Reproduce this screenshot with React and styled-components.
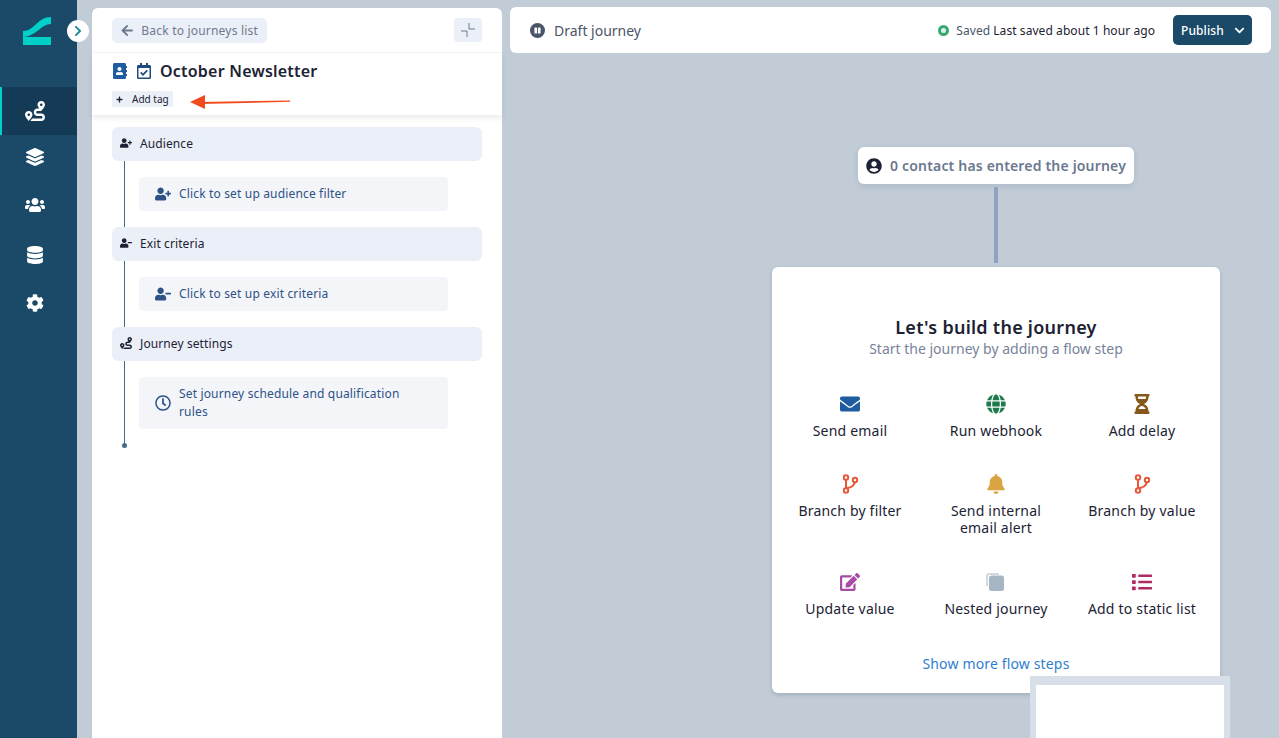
import React from 'react';
import styled, { createGlobalStyle } from 'styled-components';
import {
  FaRoute, FaLayerGroup, FaUsers, FaDatabase, FaCog, FaUserPlus, FaUserMinus, FaRegClock,
  FaEnvelope, FaGlobe, FaHourglassHalf, FaBell, FaEdit, FaList, FaUserCircle, FaPause,
  FaArrowLeft, FaChevronRight, FaChevronDown, FaPlus, FaAddressBook, FaRegCalendarCheck,
} from 'react-icons/fa';

const GlobalStyle = createGlobalStyle`
  html, body {
    margin: 0;
    height: 100%;
    overflow: hidden;
  }
  body {
    font-family: "Noto Sans", "Open Sans", sans-serif;
    background: #c1ccd7;
    color: #1c2233;
  }
  * { box-sizing: border-box; }
`;

const Page = styled.div`
  display: flex;
  height: 738px;
  position: relative;
  overflow: hidden;
`;

const Sidebar = styled.nav`
  width: 77px;
  flex: none;
  background: #1a4a68;
  padding-top: 87px;
  position: relative;
`;

const LogoMark = styled.svg`
  position: absolute;
  left: 23px;
  top: 17px;
`;

const Toggle = styled.button`
  position: absolute;
  left: 67px;
  top: 20px;
  width: 22px;
  height: 22px;
  border: none;
  border-radius: 50%;
  background: #fff;
  color: #1f8a96;
  display: flex;
  align-items: center;
  justify-content: center;
  padding: 0;
  font-size: 12px;
`;

const NavItem = styled.div`
  height: 48px;
  display: flex;
  align-items: center;
  justify-content: center;
  color: #fff;
  font-size: 18px;
  background: ${p => (p.$active ? '#153a55' : 'transparent')};
  box-shadow: ${p => (p.$active ? 'inset 2px 0 0 #00d0c8' : 'none')};
  padding-right: 7px;
  padding-bottom: ${p => p.$nudge || 0}px;
`;

const Panel = styled.aside`
  width: 410px;
  flex: none;
  margin: 8px 0 0 15px;
  background: #fff;
  border-radius: 6px 6px 0 0;
`;

const BackRow = styled.div`
  height: 45px;
  padding: 10px 20px 0;
  display: flex;
  justify-content: space-between;
  align-items: flex-start;
  border-bottom: 1px solid #f5f6f8;
`;

const BackButton = styled.button`
  height: 25px;
  width: 155px;
  border: none;
  border-radius: 5px;
  background: #ebeff7;
  color: #6f7a90;
  font: 12px "Noto Sans", sans-serif;
  letter-spacing: 0.2px;
  display: flex;
  align-items: center;
  gap: 8px;
  padding: 0 9px;
  white-space: nowrap;
`;

const CollapseButton = styled.button`
  width: 28px;
  height: 24px;
  border: none;
  border-radius: 4px;
  background: #ebeff7;
  color: #6f7a90;
  padding: 0;
  display: flex;
  align-items: center;
  justify-content: center;
`;

const TitleBlock = styled.div`
  height: 62px;
  padding: 8px 20px 0;
  box-shadow: 0 3px 5px rgba(40, 60, 90, 0.1);
  position: relative;
`;

const TitleRow = styled.div`
  display: flex;
  align-items: center;
  height: 20px;
  color: #1f5da0;
`;

const TitleIcon = styled.span`
  display: flex;
  font-size: 16px;
  margin-right: ${p => p.$gap}px;
  color: ${p => p.$color};
`;

const Title = styled.h1`
  margin: 0;
  font-size: 16px;
  line-height: 20px;
  font-weight: 600;
  letter-spacing: 0.22px;
  color: #1c2233;
`;

const TagButton = styled.div`
  margin-top: 10px;
  width: 61px;
  height: 16px;
  background: #ebeff7;
  border-radius: 2px;
  font-size: 10px;
  line-height: 16px;
  display: flex;
  align-items: center;
  gap: 9px;
  padding-left: 4px;
  color: #1c2233;
  white-space: nowrap;
`;

const Arrow = styled.svg`
  position: absolute;
  left: 190px;
  top: 93px;
`;

const Steps = styled.div`
  padding: 12px 20px 0;
`;

const StepHeader = styled.div`
  height: 34px;
  background: #ebeff7;
  border-radius: 6px;
  display: flex;
  align-items: center;
  gap: 8px;
  padding: 0 0 2px 8px;
  font-size: 12px;
  letter-spacing: 0.1px;
  color: #1c2233;
`;

const StepIcon = styled.span`
  width: 12px;
  display: flex;
  justify-content: center;
  font-size: 12px;
`;

const StepBody = styled.div`
  margin-left: 12px;
  border-left: 1px solid #3d6c8e;
  padding: 16px 0 16px 14px;
  position: relative;
`;

const EndDot = styled.span`
  position: absolute;
  left: -3px;
  bottom: -3px;
  width: 5px;
  height: 5px;
  border-radius: 50%;
  background: #3d6c8e;
`;

const StepCard = styled.div`
  width: 309px;
  min-height: 34px;
  background: #f4f5f8;
  border-radius: 4px;
  display: flex;
  align-items: center;
  gap: 8px;
  padding: 8px 40px 8px 16px;
  font-size: 12px;
  line-height: 18px;
  letter-spacing: 0.16px;
  color: #2d5288;
`;

const CardIcon = styled.span`
  width: 16px;
  flex: none;
  display: flex;
  justify-content: center;
  font-size: 16px;
`;

const Main = styled.main`
  flex: 1;
  padding: 7px 8px 0;
  position: relative;
`;

const TopBar = styled.header`
  height: 46px;
  background: #fff;
  border-radius: 6px;
  display: flex;
  align-items: center;
  padding: 0 19px 0 20px;
  font-size: 12px;
  letter-spacing: 0.07px;
`;

const Status = styled.div`
  display: flex;
  align-items: center;
  gap: 9px;
  font-size: 14px;
  letter-spacing: 0;
  color: #4b5568;
  margin-right: auto;
`;

const PauseDot = styled.span`
  width: 15px;
  height: 15px;
  border-radius: 50%;
  background: #4b5568;
  color: #fff;
  font-size: 7px;
  display: flex;
  align-items: center;
  justify-content: center;
`;

const SavedDot = styled.span`
  width: 11px;
  height: 11px;
  border-radius: 50%;
  border: 3px solid #3aa873;
  background-color: #d9f3e5;
  margin-right: 7px;
`;

const SavedLabel = styled.span`
  color: #4b5568;
  margin-right: 3px;
`;

const SavedTime = styled.span`
  color: #1c2233;
  margin-right: 18px;
`;

const PublishButton = styled.button`
  width: 79px;
  height: 30px;
  background: #1a4a68;
  color: #fff;
  border: none;
  border-radius: 5px;
  font: 500 12px "Noto Sans", sans-serif;
  letter-spacing: 0.1px;
  display: flex;
  align-items: center;
  gap: 10px;
  padding: 0 0 0 8px;
`;

const ContactNode = styled.div`
  position: absolute;
  left: 356px;
  top: 147px;
  width: 276px;
  height: 37px;
  background: #fff;
  border-radius: 6px;
  box-shadow: 0 2px 6px rgba(40, 60, 90, 0.12);
  display: flex;
  align-items: center;
  gap: 8px;
  padding-left: 8px;
  font-size: 14px;
  font-weight: 600;
  letter-spacing: 0.18px;
  color: #6b7890;
  white-space: nowrap;
`;

const ContactIcon = styled.span`
  display: flex;
  font-size: 16px;
  color: #1c2233;
`;

const Connector = styled.div`
  position: absolute;
  left: 492px;
  top: 187px;
  width: 4px;
  height: 76px;
  background: #8fa2c2;
`;

const FlowCard = styled.section`
  position: absolute;
  left: 270px;
  top: 267px;
  width: 448px;
  height: 426px;
  background: #fff;
  border-radius: 6px;
  box-shadow: 0 2px 4px rgba(40, 60, 90, 0.2);
  display: flex;
  flex-direction: column;
  align-items: center;
  padding-top: 48px;
`;

const FlowTitle = styled.h2`
  margin: 0;
  font-size: 18px;
  line-height: 24px;
  font-weight: 600;
  letter-spacing: 0.26px;
  color: #1c2233;
`;

const FlowSubtitle = styled.p`
  margin: 0 0 35px;
  font-size: 14px;
  line-height: 20px;
  color: #78839a;
`;

const FlowGrid = styled.div`
  width: 438px;
  display: grid;
  grid-template-columns: repeat(3, 146px);
  grid-template-rows: 80px 98px 80px;
`;

const FlowItem = styled.div`
  display: flex;
  flex-direction: column;
  align-items: center;
  text-align: center;
  font-size: 14px;
  line-height: 17px;
  letter-spacing: 0.2px;
  color: #1c2233;
`;

const FlowIcon = styled.span`
  height: 20px;
  margin-bottom: 7.5px;
  display: flex;
  align-items: center;
  justify-content: center;
  font-size: 20px;
  color: ${p => p.$color};
`;

const MoreLink = styled.a`
  margin-top: 2px;
  font-size: 14px;
  line-height: 20px;
  letter-spacing: 0.15px;
  color: #2f80d0;
`;

const MiniMap = styled.div`
  position: absolute;
  left: 528px;
  top: 676px;
  width: 200px;
  height: 70px;
  background: #fff;
  border: 6px solid #d9dfe8;
  border-top-width: 9px;
  border-bottom: none;
`;

function BranchIcon() {
  return (
    <svg width="20" height="20" viewBox="0 0 20 20" fill="none" stroke="#e5583a" strokeWidth="2">
      <circle cx="6" cy="3.5" r="2.2" />
      <circle cx="15" cy="6" r="2.2" />
      <circle cx="6" cy="16.5" r="2.2" />
      <path d="M6 6v8M6 14c5 0 8-2 9-6" />
    </svg>
  );
}

function NestedIcon() {
  return (
    <svg width="20" height="20" viewBox="0 0 20 20">
      <path d="M1 14V4a2 2 0 0 1 2-2h10" fill="none" stroke="#c3cdd8" strokeWidth="1.5" />
      <rect x="3" y="3.5" width="15" height="15.5" rx="2.5" fill="#a7b6c5" />
    </svg>
  );
}

function CollapseIcon() {
  return (
    <svg width="14" height="14" viewBox="0 0 14 14" fill="none" stroke="currentColor" strokeWidth="1">
      <path d="M8 0v6h6M6 14V8H0" />
    </svg>
  );
}

const flowSteps = [
  { label: 'Send email', color: '#1f5da0', icon: <FaEnvelope /> },
  { label: 'Run webhook', color: '#1f7a4d', icon: <FaGlobe size={20} /> },
  { label: 'Add delay', color: '#85591a', icon: <FaHourglassHalf size={20} /> },
  { label: 'Branch by filter', icon: <BranchIcon /> },
  { label: <>Send internal<br />email alert</>, color: '#d9a441', icon: <FaBell size={20} /> },
  { label: 'Branch by value', icon: <BranchIcon /> },
  { label: 'Update value', color: '#a64ca6', icon: <FaEdit /> },
  { label: 'Nested journey', icon: <NestedIcon /> },
  { label: 'Add to static list', color: '#b02a63', icon: <FaList /> },
];

export default function App() {
  return (
    <Page>
      <GlobalStyle />
      <Sidebar>
        <LogoMark width="28" height="28" viewBox="0 0 28 28">
          <path d="M0 14C12 14 14 0 28 0V7C18 7 14 19 0 20Z" fill="#00d0c8" />
          <rect y="20" width="28" height="8" fill="#00d0c8" />
        </LogoMark>
        <Toggle><FaChevronRight /></Toggle>
        <NavItem $active><FaRoute size={20} /></NavItem>
        <NavItem $nudge={4}><FaLayerGroup /></NavItem>
        <NavItem $nudge={4}><FaUsers size={20} /></NavItem>
        <NavItem><FaDatabase /></NavItem>
        <NavItem><FaCog /></NavItem>
      </Sidebar>

      <Panel>
        <BackRow>
          <BackButton><FaArrowLeft size={13} />Back to journeys list</BackButton>
          <CollapseButton><CollapseIcon /></CollapseButton>
        </BackRow>
        <TitleBlock>
          <TitleRow>
            <TitleIcon $gap={8} $color="#1f5da0"><FaAddressBook /></TitleIcon>
            <TitleIcon $gap={8} $color="#1f4a80"><FaRegCalendarCheck /></TitleIcon>
            <Title>October Newsletter</Title>
          </TitleRow>
          <TagButton><FaPlus size={7} />Add tag</TagButton>
        </TitleBlock>
        <Steps>
          <StepHeader><StepIcon><FaUserPlus /></StepIcon>Audience</StepHeader>
          <StepBody>
            <StepCard><CardIcon><FaUserPlus /></CardIcon>Click to set up audience filter</StepCard>
          </StepBody>
          <StepHeader><StepIcon><FaUserMinus /></StepIcon>Exit criteria</StepHeader>
          <StepBody>
            <StepCard><CardIcon><FaUserMinus /></CardIcon>Click to set up exit criteria</StepCard>
          </StepBody>
          <StepHeader><StepIcon><FaRoute /></StepIcon>Journey settings</StepHeader>
          <StepBody>
            <StepCard><CardIcon><FaRegClock /></CardIcon>Set journey schedule and qualification rules</StepCard>
            <EndDot />
          </StepBody>
        </Steps>
      </Panel>

      <Main>
        <TopBar>
          <Status><PauseDot><FaPause /></PauseDot>Draft journey</Status>
          <SavedDot />
          <SavedLabel>Saved</SavedLabel>
          <SavedTime>Last saved about 1 hour ago</SavedTime>
          <PublishButton>Publish <FaChevronDown size={11} /></PublishButton>
        </TopBar>

        <ContactNode>
          <ContactIcon><FaUserCircle /></ContactIcon>
          0 contact has entered the journey
        </ContactNode>
        <Connector />
        <FlowCard>
          <FlowTitle>Let's build the journey</FlowTitle>
          <FlowSubtitle>Start the journey by adding a flow step</FlowSubtitle>
          <FlowGrid>
            {flowSteps.map((step, i) => (
              <FlowItem key={i}>
                <FlowIcon $color={step.color}>{step.icon}</FlowIcon>
                {step.label}
              </FlowItem>
            ))}
          </FlowGrid>
          <MoreLink>Show more flow steps</MoreLink>
        </FlowCard>
        <MiniMap />
      </Main>

      <Arrow width="100" height="16" viewBox="0 0 100 16">
        <path d="M10 9L100 7.5V8.8L10 11Z" fill="#f04a1d" />
        <path d="M0 9L15 2V16Z" fill="#f04a1d" />
      </Arrow>
    </Page>
  );
}
